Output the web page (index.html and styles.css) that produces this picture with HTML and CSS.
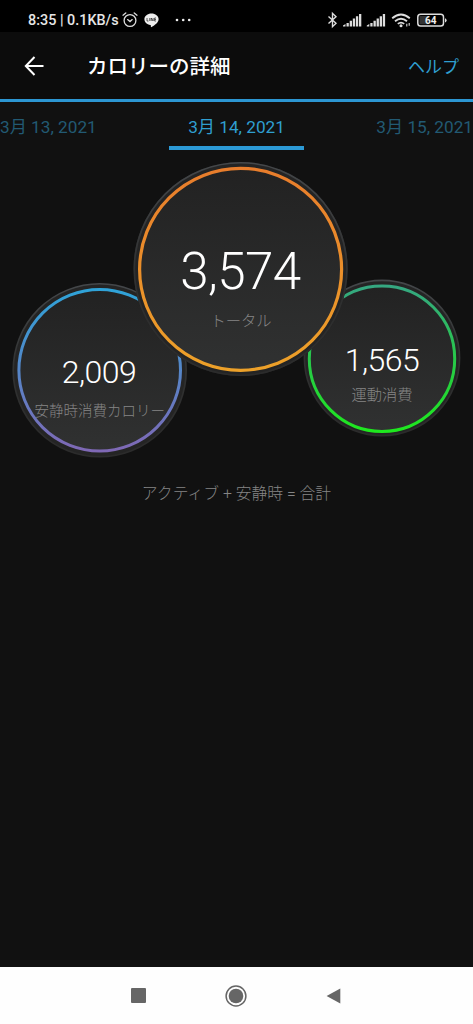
FILE: index.html
```html
<!DOCTYPE html>
<html lang="ja">
<head>
<meta charset="utf-8">
<title>カロリーの詳細</title>
<link rel="stylesheet" href="styles.css">
</head>
<body>
<div class="screen">
  <div class="status">
    <span class="clock">8:35 | 0.1KB/s</span>
    <svg class="alarm" width="16" height="16" viewBox="0 0 16 16" fill="none" stroke="#ddd" stroke-width="1.3" stroke-linecap="round"><circle cx="8" cy="8.5" r="5.9"/><path d="M1 3.2 3.8 1M15 3.2 12.2 1M5.6 7.6 8 9.6l2.2-2"/></svg>
    <svg class="line" width="15" height="15" viewBox="0 0 15 15"><path fill="#eee" d="M7.5 .6C3.600 .6.400 3.100.400 6.300c0 2.900 2.500 5.200 5.900 5.700.7.200.7.500.6 1.100-.2 1.200.1 1.300 1.100.7 2.500-1.500 6.600-4.200 6.600-7.500 0-3.200-3.200-5.700-7.100-5.700z"/><path d="M3 5v3h1.500M5.800 5v3M7.200 8V5l1.900 3V5M12 5h-1.400v3H12M10.600 6.500H12" fill="none" stroke="#333" stroke-width=".8"/></svg>
    <svg class="more" width="17" height="4" viewBox="0 0 17 4" fill="#eee"><circle cx="2" cy="2" r="1.3"/><circle cx="8.200" cy="2" r="1.300"/><circle cx="14.200" cy="2" r="1.300"/></svg>
    <svg class="radios" width="122" height="18" viewBox="0 0 122 18">
      <path d="M2.500 5.500 10 12.300 6.500 15.700V2.300L10 5.700 2.500 12.500" fill="none" stroke="#ddd" stroke-width="1.400"/>
      <g id="signal" fill="#ddd"><path d="M17 15.500v-1l2.500-1.500v2.500zM20.500 12h2.300v3.500h-2.300zM23.700 9.800h2.300v5.700h-2.300zM26.800 7.500h2.300v8h-2.300zM29.900 5.200h2.300v10.300h-2.300zM33 3h2.300v12.500H33z"/></g>
      <use href="#signal" x="23.800"/>
      <g fill="none" stroke="#ddd" stroke-width="1.800"><path d="M66.200 7.200Q75-.3 83.800 7.200M69 10.200Q75 5.200 81 10.200M71.800 12.900Q75 10.300 78.200 12.900"/></g>
      <circle cx="75" cy="14.800" r="1.500" fill="#ddd"/>
      <path d="M80.800 15.500v-2.800M83.200 12v2.800" stroke="#ddd" stroke-width="1.100"/>
      <rect x="91.800" y="3.200" width="25.700" height="11.900" rx="2.800" fill="none" stroke="#ddd" stroke-width="1.500"/>
      <path d="M93.500 5h9v8.300h-9z" fill="#333"/>
      <path d="M119 7.200v4.200q1.600-.3 1.600-2.100T119 7.200z" fill="#ddd"/>
      <text class="battery" x="104.700" y="12.800">64</text>
    </svg>
  </div>
  <header class="header">
    <svg class="back" width="20" height="20" viewBox="0 0 20 20" fill="none" stroke="#fff" stroke-width="2"><path d="M10.500 1 1.800 10l8.700 9M1.800 10h17.700"/></svg>
    <h1 class="title">カロリーの詳細</h1>
    <span class="help">ヘルプ</span>
  </header>
  <nav class="dates">
    <span class="date">3月 13, 2021</span>
    <span class="date active">3月 14, 2021</span>
    <span class="date next">3月 15, 2021</span>
  </nav>
  <main class="content">
    <svg class="bubbles" width="473" height="310" viewBox="0 150 473 310">
      <defs>
        <linearGradient id="face" x2="0" y2="1"><stop stop-color="#222"/><stop offset="1" stop-color="#303131"/></linearGradient>
        <linearGradient id="rim" x2="0" y2="1"><stop stop-color="#44474a"/><stop offset=".5" stop-color="#303131"/><stop offset="1" stop-color="#2b2b2b"/></linearGradient>
        <linearGradient id="orange" x2="0" y2="1"><stop stop-color="#e87d2c"/><stop offset="1" stop-color="#eda129"/></linearGradient>
        <linearGradient id="blue" x2="0" y2="1"><stop stop-color="#2fa3d8"/><stop offset=".5" stop-color="#5586c8"/><stop offset="1" stop-color="#7f68b5"/></linearGradient>
        <linearGradient id="green" x2="0" y2="1"><stop stop-color="#35a781"/><stop offset=".5" stop-color="#28c84a"/><stop offset="1" stop-color="#1ee81e"/></linearGradient>
      </defs>
      <circle cx="99.700" cy="370.300" r="86.500" fill="#242424" stroke="url(#rim)" stroke-width="1.600"/>
      <circle cx="99.700" cy="370.300" r="80.800" fill="url(#face)" stroke="url(#blue)" stroke-width="3"/>
      <circle cx="382" cy="358" r="77.600" fill="#242424" stroke="url(#rim)" stroke-width="1.600"/>
      <circle cx="382" cy="358.700" r="72.700" fill="url(#face)" stroke="url(#green)" stroke-width="3"/>
      <circle cx="240.600" cy="269" r="104.700" fill="#242424" stroke="#242424" stroke-width="4.800"/>
      <circle cx="240.600" cy="269" r="106.300" fill="none" stroke="url(#rim)" stroke-width="1.600"/>
      <circle cx="240.600" cy="269.300" r="101" fill="url(#face)" stroke="url(#orange)" stroke-width="3.200"/>
      <text class="num total" x="240.400" y="289">3,574</text>
      <text class="label" x="241" y="325.500">トータル</text>
      <text class="num" x="99" y="382.700">2,009</text>
      <text class="label resting" x="99.800" y="416.200">安静時消費カロリー</text>
      <text class="num" x="382" y="370.700">1,565</text>
      <text class="label" x="382" y="400.200">運動消費</text>
    </svg>
    <p class="formula">アクティブ + 安静時 = 合計</p>
  </main>
  <footer class="navbar">
    <svg width="15" height="15" viewBox="0 0 15 15"><rect width="15" height="15" rx="1" fill="#666"/></svg>
    <svg width="22" height="22" viewBox="0 0 22 22"><circle cx="11" cy="11" r="9.900" fill="none" stroke="#666" stroke-width="1.500"/><circle cx="11" cy="11" r="7.300" fill="#666"/></svg>
    <svg width="15" height="16" viewBox="0 0 15 16"><path d="M14.300.5v15L.6 8z" fill="#666"/></svg>
  </footer>
</div>
</body>
</html>
```
FILE: styles.css
```css
body {
  margin: 0;
  background: #111;
  font-family: Roboto, "Noto Sans CJK JP", sans-serif;
}

.screen {
  display: flex;
  flex-direction: column;
  width: 473px;
  height: 1024px;
  overflow: hidden;
  background: #111;
}

.status {
  display: flex;
  align-items: center;
  box-sizing: border-box;
  height: 32px;
  padding: 8px 25px 0 28px;
  background: #000;
}

.clock {
  width: 94px;
  padding-top: 1px;
  color: #e6e6e6;
  font-size: 14.400px;
  font-weight: 500;
  line-height: 16px;
  white-space: nowrap;
}

.line {
  margin-left: 6px;
}

.more {
  margin-left: 16px;
}

.radios {
  margin-left: auto;
}

.battery {
  fill: #eee;
  font-size: 10px;
  font-weight: 700;
  text-anchor: middle;
}

.header {
  display: flex;
  align-items: center;
  box-sizing: border-box;
  height: 70px;
  padding: 0 14px 0 24px;
  border-bottom: 3px solid #2c96d2;
  background: #0c0c0c;
}

.title {
  margin: 2px 0 0 43px;
  color: #fff;
  font-size: 20.500px;
  font-weight: 500;
  line-height: 30px;
}

.help {
  margin-left: auto;
  color: #2f9fd0;
  font-size: 17px;
}

.dates {
  display: grid;
  grid-template-columns: 169px 135px 169px;
  height: 48px;
  color: #225a73;
  font-size: 17.200px;
  line-height: 50px;
  white-space: nowrap;
}

.active {
  box-sizing: border-box;
  height: 48px;
  border-bottom: 4px solid #2c9ad6;
  color: #2f9fd0;
  text-align: center;
}

.next {
  text-align: right;
}

.content {
  flex: 1;
}

.bubbles {
  display: block;
}

.num {
  fill: #fff;
  font-size: 32px;
  font-weight: 300;
  letter-spacing: -.5px;
  text-anchor: middle;
}

.total {
  font-size: 51.200px;
  letter-spacing: -.6px;
}

.label {
  fill: #858585;
  font-size: 15.300px;
  font-weight: 300;
  text-anchor: middle;
}

.resting {
  font-size: 14.500px;
}

.formula {
  margin: 22px 0 0;
  color: #858585;
  font-size: 15.800px;
  font-weight: 300;
  line-height: 24px;
  text-align: center;
}

.navbar {
  display: flex;
  align-items: center;
  justify-content: space-between;
  box-sizing: border-box;
  height: 57px;
  padding: 0 132px 0 131px;
  background: #fefefe;
}
```
